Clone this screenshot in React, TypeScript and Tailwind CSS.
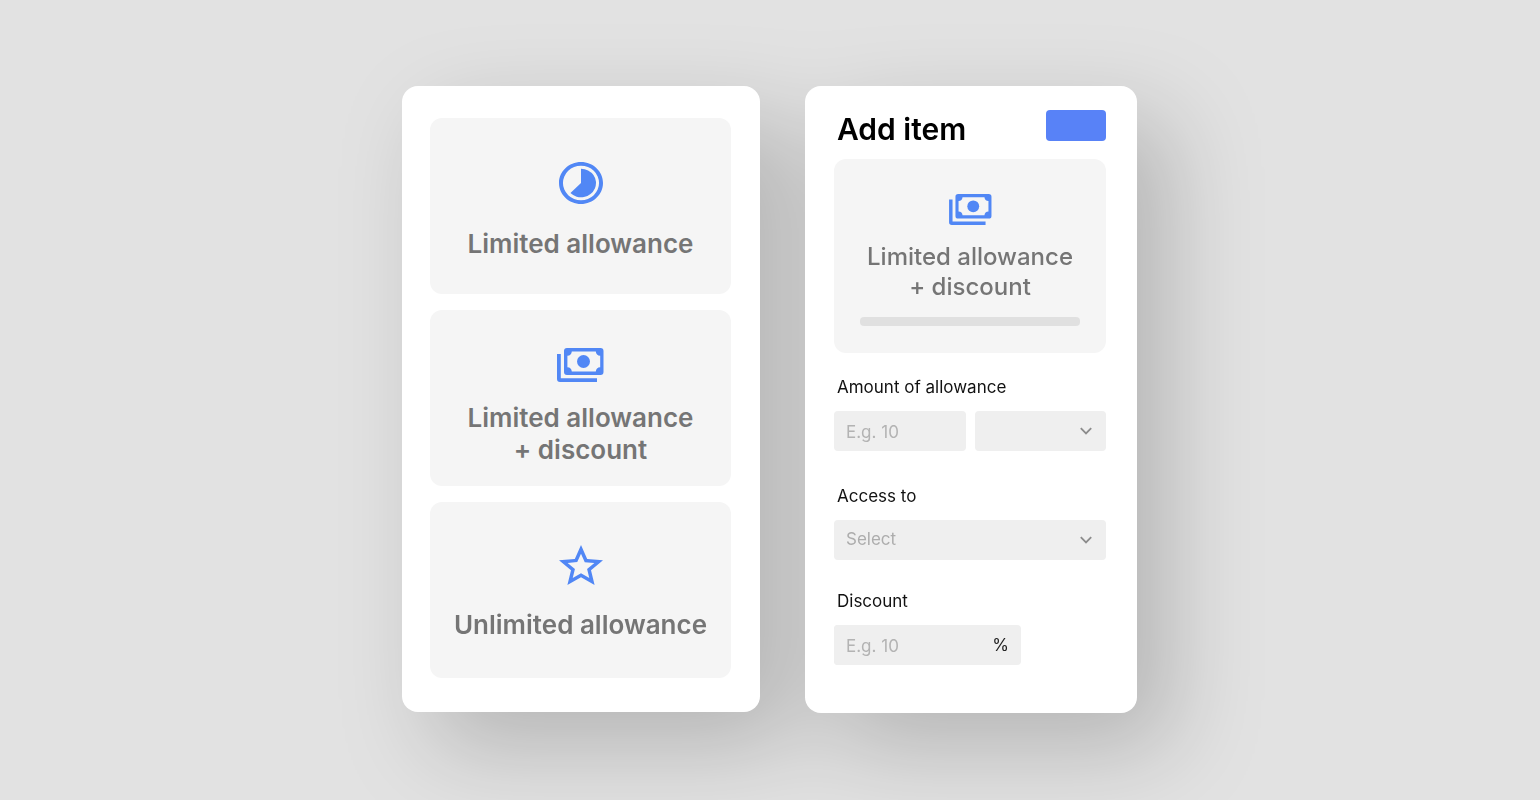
import type { ReactNode } from "react";
import clsx from "clsx";

function TimelapseIcon() {
  return (
    <svg
      className="h-[42px] w-[44px]"
      viewBox="2 2 20 20"
      preserveAspectRatio="none"
      fill="currentColor"
      aria-hidden="true"
    >
      <path d="M12 5.200v6.800l-4.800 4.800A6.800 6.800 0 1 0 12 5.200z" />
      <path d="M12 2C6.480 2 2 6.480 2 12s4.480 10 10 10 10-4.480 10-10S17.520 2 12 2zm0 18.200a8.200 8.200 0 1 1 0-16.400 8.200 8.200 0 0 1 0 16.400z" />
    </svg>
  );
}

function MoneyIcon({ className }: { className: string }) {
  return (
    <svg className={className} viewBox="0 0 47 34" fill="currentColor" aria-hidden="true">
      <path d="M0 6h3.800v24.200H40V34H3a3 3 0 0 1-3-3z" />
      <path
        fillRule="evenodd"
        d="M10 0h33.500a3 3 0 0 1 3 3v21a3 3 0 0 1-3 3H10a3 3 0 0 1-3-3V3a3 3 0 0 1 3-3zM14.800 3.600a4.600 4.600 0 0 1-4.400 4.200v11.400a4.600 4.600 0 0 1 4.400 4.200h24a4.600 4.600 0 0 1 4.400-4.200V7.800a4.600 4.600 0 0 1-4.400-4.200z"
      />
      <circle cx="26.500" cy="13.500" r="6.500" />
    </svg>
  );
}

function StarIcon() {
  return (
    <svg
      className="h-10 w-[44px]"
      viewBox="2 2 20 19"
      preserveAspectRatio="none"
      fill="currentColor"
      aria-hidden="true"
    >
      <path d="M22 9.24l-7.19-.62L12 2 9.19 8.63 2 9.24l5.46 4.73L5.82 21 12 17.27 18.18 21l-1.63-7.03L22 9.24zM12 15.4l-3.76 2.27 1-4.28-3.32-2.88 4.38-.38L12 6.1l1.71 4.04 4.38.38-3.32 2.88 1 4.28L12 15.4z" />
    </svg>
  );
}

function Chevron() {
  return (
    <svg
      className="pointer-events-none absolute top-4 right-3.5 h-2 w-3"
      viewBox="0 0 12 8"
      fill="none"
      stroke="#8c8c8c"
      strokeWidth="1.8"
      aria-hidden="true"
    >
      <path d="M0.800 1.200L6 6.500l5.200-5.300" />
    </svg>
  );
}

interface OptionProps {
  icon: ReactNode;
  className: string;
  children: ReactNode;
}

function Option({ icon, className, children }: OptionProps) {
  return (
    <button
      type="button"
      className={clsx(
        "flex h-44 w-full flex-col items-center rounded-xl bg-[#f5f5f5] text-[26px] leading-8 font-[560] text-[#757575]",
        className
      )}
    >
      <span className="text-[#5187f5]">{icon}</span>
      <span>{children}</span>
    </button>
  );
}

const field =
  "h-10 w-full appearance-none rounded bg-[#efefef] px-3 text-[17px] text-[#adadad] outline-none placeholder:text-[#b3b3b3]";
const label = "ml-[3px] block text-[17px] leading-6 text-[#111111]";

export default function App() {
  return (
    <main className="min-h-screen overflow-hidden bg-[#e2e2e2] py-[86px] pr-[17px] pl-4 font-['Inter',sans-serif]">
      <div className="flex items-start justify-center gap-[45px] drop-shadow-[32px_34px_46px_rgba(0,0,0,0.2)]">
        <section className="flex w-[358px] flex-col gap-4 rounded-2xl bg-white pt-8 pr-[29px] pb-[34px] pl-7">
          <Option className="gap-6 pt-11" icon={<TimelapseIcon />}>
            Limited allowance
          </Option>
          <Option className="gap-5 pt-[38px]" icon={<MoneyIcon className="h-[34px] w-[47px]" />}>
            Limited allowance
            <br />+ discount
          </Option>
          <Option className="gap-6 pt-[43px]" icon={<StarIcon />}>
            Unlimited allowance
          </Option>
        </section>

        <form className="w-[332px] rounded-2xl bg-white pt-6 pr-[31px] pb-12 pl-[29px]">
          <div className="flex items-start justify-between">
            <h1 className="ml-[3px] text-[30px] leading-[38px] font-[560] text-black">Add item</h1>
            <button
              type="submit"
              aria-label="Add item"
              className="h-[31px] w-[60px] rounded bg-[#5882f7]"
            />
          </div>

          <div className="mt-[11px] flex h-[194px] flex-col items-center rounded-xl bg-[#f5f5f5] pt-[35px]">
            <span className="text-[#5187f5]">
              <MoneyIcon className="h-[31px] w-[43px]" />
            </span>
            <p className="mt-[17px] text-center text-2xl leading-[30px] font-medium text-[#757575]">
              Limited allowance
              <br />+ discount
            </p>
            <div className="mt-[15px] h-[9px] w-[220px] rounded bg-[#e0e0e0]" />
          </div>

          <label htmlFor="amount" className={clsx(label, "mt-[22px]")}>
            Amount of allowance
          </label>
          <div className="mt-3 grid grid-cols-2 gap-[9px]">
            <input id="amount" className={clsx(field, "pt-0.5")} placeholder="E.g. 10" />
            <div className="relative">
              <select aria-label="Unit" className={field}>
                <option></option>
              </select>
              <Chevron />
            </div>
          </div>

          <label htmlFor="access" className={clsx(label, "mt-[33px]")}>
            Access to
          </label>
          <div className="relative mt-3">
            <select id="access" className={field}>
              <option>Select</option>
            </select>
            <Chevron />
          </div>

          <label htmlFor="discount" className={clsx(label, "mt-[29px]")}>
            Discount
          </label>
          <div className="mt-3 flex w-[187px] items-center rounded bg-[#efefef] pr-3">
            <input
              id="discount"
              className={clsx(field, "min-w-0 flex-1 pt-0.5")}
              placeholder="E.g. 10"
            />
            <span className="pt-0.5 text-[17px] text-[#222222]">%</span>
          </div>
        </form>
      </div>
    </main>
  );
}
